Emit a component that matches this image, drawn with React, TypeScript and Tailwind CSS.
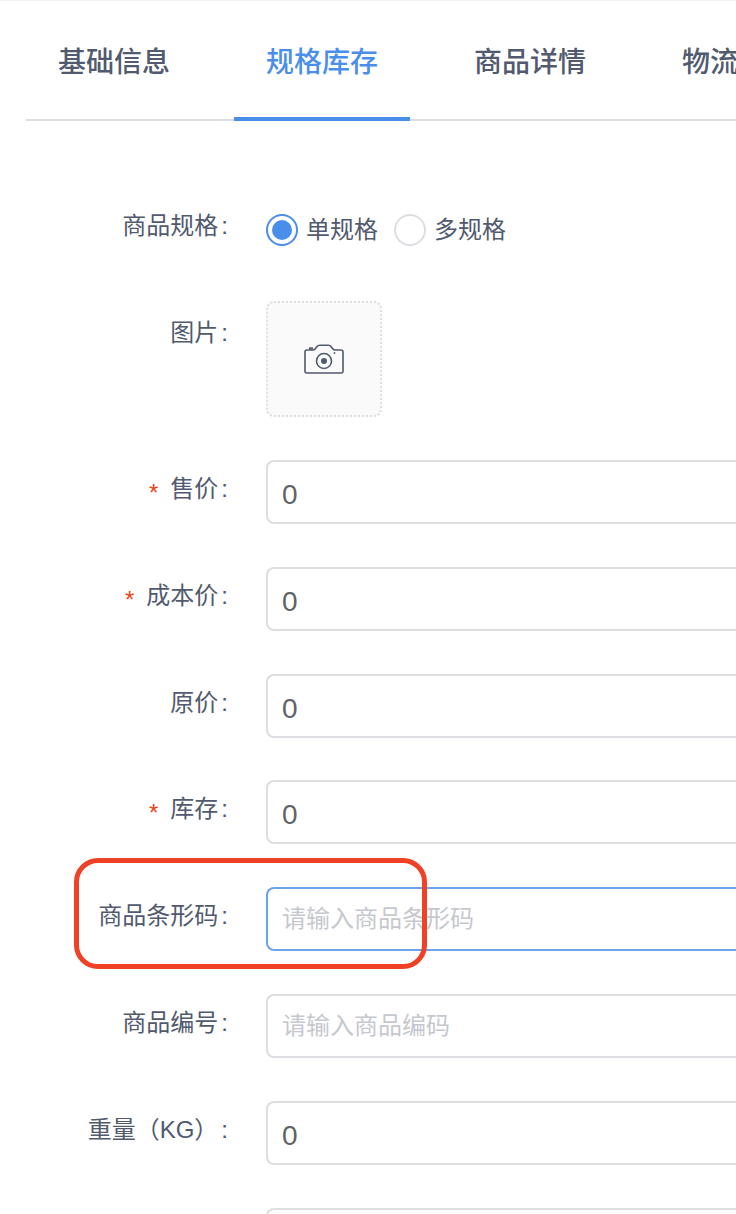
const F = '"Liberation Sans", "Noto Sans CJK SC", sans-serif';

function Label({ text, req, className = '' }: { text: string; req?: boolean; className?: string }) {
  return (
    <div className={`w-[228px] shrink-0 flex justify-end text-[24px] leading-[34px] text-[#515a6e] whitespace-nowrap ${className}`}>
      {req && <span className="text-[#ed4014] mr-[12px] mt-[4px] text-[24px]">*</span>}
      <span>{text}</span>
      <span className="ml-[3px]">:</span>
    </div>
  );
}

function Row({ label, req, value, placeholder, focus, mb = 'mb-[43px]' }: { label?: string; req?: boolean; value?: string; placeholder?: string; focus?: boolean; mb?: string }) {
  return (
    <div className={`flex h-[64px] shrink-0 ${mb}`}>
      {label ? <Label text={label} req={req} className="pt-[12px]" /> : <div className="w-[228px] shrink-0" />}
      <div className={`ml-[38px] flex-1 h-[64px] rounded-l-[8px] border-2 border-r-0 flex items-center pl-[14px] ${focus ? 'border-[#6aa3ee]' : 'border-[#dcdee2]'}`}>
        {value && <span className="text-[28px] pt-[6px] text-[#606266]">{value}</span>}
        {placeholder && <span className="text-[24px] text-[#c5c8ce] whitespace-nowrap">{placeholder}</span>}
      </div>
    </div>
  );
}

const tabs = ['基础信息', '规格库存', '商品详情', '物流设置'];

export default function App() {
  return (
    <div className="relative w-[736px] h-[1214px] overflow-hidden bg-white flex flex-col" style={{ fontFamily: F }}>
      <div className="h-[1px] bg-[#f2f2f4] shrink-0" />
      <div className="ml-[26px] h-[120px] shrink-0 border-b-2 border-[#dcdee2] flex gap-[32px] whitespace-nowrap text-[28px] font-medium leading-[40px] text-[#515a6e]">
        {tabs.map((t, i) => (
          <div key={t} className={`relative w-[176px] shrink-0 pt-[42px] text-center ${i === 1 ? 'text-[#4a8eeb]' : ''}`}>
            {t}
            {i === 1 && <div className="absolute left-0 right-0 -bottom-[2px] h-[4px] bg-[#4a8eeb]" />}
          </div>
        ))}
      </div>

      <div className="flex h-[38px] mt-[87px] shrink-0">
        <Label text="商品规格" className="pt-[1px]" />
        <div className="ml-[38px] pt-[6px] flex items-center h-[38px] text-[24px] text-[#515a6e] whitespace-nowrap">
          <span className="w-[32px] h-[32px] rounded-full border-2 border-[#4a8eeb] flex items-center justify-center">
            <span className="w-[20px] h-[20px] rounded-full bg-[#4a8eeb]" />
          </span>
          <span className="ml-[8px]">单规格</span>
          <span className="ml-[16px] w-[32px] h-[32px] rounded-full border-2 border-[#dcdee2]" />
          <span className="ml-[8px]">多规格</span>
        </div>
      </div>

      <div className="flex h-[116px] mt-[55px] mb-[43px] shrink-0">
        <Label text="图片" className="pt-[15px]" />
        <div className="ml-[38px] w-[116px] h-[116px] rounded-[8px] border-2 border-dotted border-[#dcdee2] bg-[#fafafa] flex items-center justify-center">
          <svg width="40" height="30" viewBox="0 0 40 30" fill="none" stroke="#515a6e" strokeWidth="1.6" strokeLinejoin="round">
            <path d="M1 8 Q1 6 3 6 H9 Q10.5 6 11.5 4.5 L13 2.5 Q14 1.2 15.5 1.2 H24.5 Q26 1.2 27 2.5 L28.5 4.5 Q29.5 6 31 6 H37 Q39 6 39 8 V27 Q39 29 37 29 H3 Q1 29 1 27 Z" />
            <circle cx="20" cy="17" r="7.5" />
            <circle cx="20" cy="17" r="3" fill="#515a6e" stroke="none" />
            <path d="M5 4.4 H9" strokeWidth="2.2" />
            <circle cx="30.5" cy="9" r="0.9" fill="#515a6e" stroke="none" />
          </svg>
        </div>
      </div>

      <Row label="售价" req value="0" />
      <Row label="成本价" req value="0" />
      <Row label="原价" value="0" mb="mb-[42px]" />
      <Row label="库存" req value="0" />
      <Row label="商品条形码" placeholder="请输入商品条形码" focus />
      <Row label="商品编号" placeholder="请输入商品编码" />
      <Row label="重量（KG）" value="0" />
      <Row />

      <div className="absolute left-[74px] top-[858px] w-[353px] h-[111px] rounded-[24px] border-[5px] border-[#ee4125]" />
    </div>
  );
}
